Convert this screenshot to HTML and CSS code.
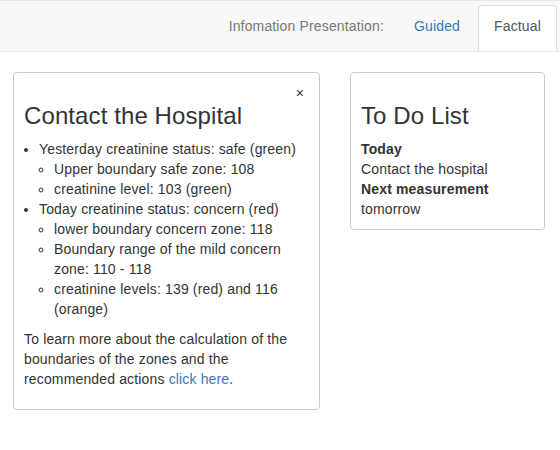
FILE: index.html
```html
<!DOCTYPE html>
<html>
<head>
<meta charset="utf-8">
<link rel="stylesheet" href="styles.css">
</head>
<body>
<nav class="navbar">
  <span class="navbar-text">Infomation Presentation:</span>
  <ul class="tabs">
    <li class="tab"><a href="#">Guided</a></li>
    <li class="tab active"><a href="#">Factual</a></li>
  </ul>
</nav>
<main class="main">
  <section class="panel panel-left">
    <button class="close" type="button">×</button>
    <h3 class="panel-title">Contact the Hospital</h3>
    <ul class="list">
      <li>Yesterday creatinine status: safe (green)
        <ul class="sublist">
          <li>Upper boundary safe zone: 108</li>
          <li>creatinine level: 103 (green)</li>
        </ul>
      </li>
      <li>Today creatinine status: concern (red)
        <ul class="sublist">
          <li>lower boundary concern zone: 118</li>
          <li>Boundary range of the mild concern zone: 110 - 118</li>
          <li>creatinine levels: 139 (red) and 116 (orange)</li>
        </ul>
      </li>
    </ul>
    <p class="para">To learn more about the calculation of the boundaries of the zones and the recommended actions <a href="#" class="link">click here</a>.</p>
  </section>
  <section class="panel panel-right">
    <h3 class="panel-title">To Do List</h3>
    <div class="todo-label">Today</div>
    <div>Contact the hospital</div>
    <div class="todo-label">Next measurement</div>
    <div>tomorrow</div>
  </section>
</main>
</body>
</html>
```
FILE: styles.css
```css
html, body {
  margin: 0;
  padding: 0;
  background: #fff;
}
body {
  font-family: "Liberation Sans", Arial, sans-serif;
  font-size: 14px;
  line-height: 20px;
  color: #333;
  letter-spacing: 0.15px;
}
.navbar {
  display: flex;
  justify-content: flex-end;
  align-items: stretch;
  height: 50px;
  background: #f8f8f8;
  border-top: 1px solid #e7e7e7;
  border-bottom: 1px solid #e7e7e7;
  padding-right: 1px;
}
.navbar-text {
  color: #777;
  align-self: flex-start;
  margin: 15px 14px 0 0;
}
.tabs {
  display: flex;
  list-style: none;
  margin: 0;
  padding: 0;
  align-items: flex-end;
}
.tab {
  margin-right: 2px;
}
.tab a {
  display: block;
  padding: 10px 15px 15px;
  border: 1px solid transparent;
  border-bottom: none;
  border-radius: 4px 4px 0 0;
  color: #337ab7;
  text-decoration: none;
}
.tab.active a {
  background: #fff;
  border-color: #ddd;
  color: #555;
}
.main {
  display: flex;
  align-items: flex-start;
  gap: 30px;
  padding: 20px 0 0 13px;
}
.panel {
  border: 1px solid #ccc;
  border-radius: 4px;
  padding: 10px;
}
.panel-left {
  width: 285px;
}
.panel-right {
  width: 173px;
}
.close {
  float: right;
  border: 0;
  background: none;
  padding: 0;
  margin: 0 5px 0 0;
  font-family: "Liberation Sans", Arial, sans-serif;
  font-size: 14px;
  line-height: 20px;
  color: #333;
  cursor: pointer;
}
.panel-title {
  margin: 20px 0 10px;
  font-size: 24px;
  line-height: 1.1;
  font-weight: normal;
  letter-spacing: 0.1px;
}
.list {
  margin: 0 0 10px;
  padding-left: 15px;
}
.sublist {
  margin: 0;
  padding-left: 15px;
}
.para {
  margin: 0 0 10px;
}
.link {
  color: #337ab7;
  text-decoration: none;
}
.todo-label {
  font-weight: bold;
}
```
